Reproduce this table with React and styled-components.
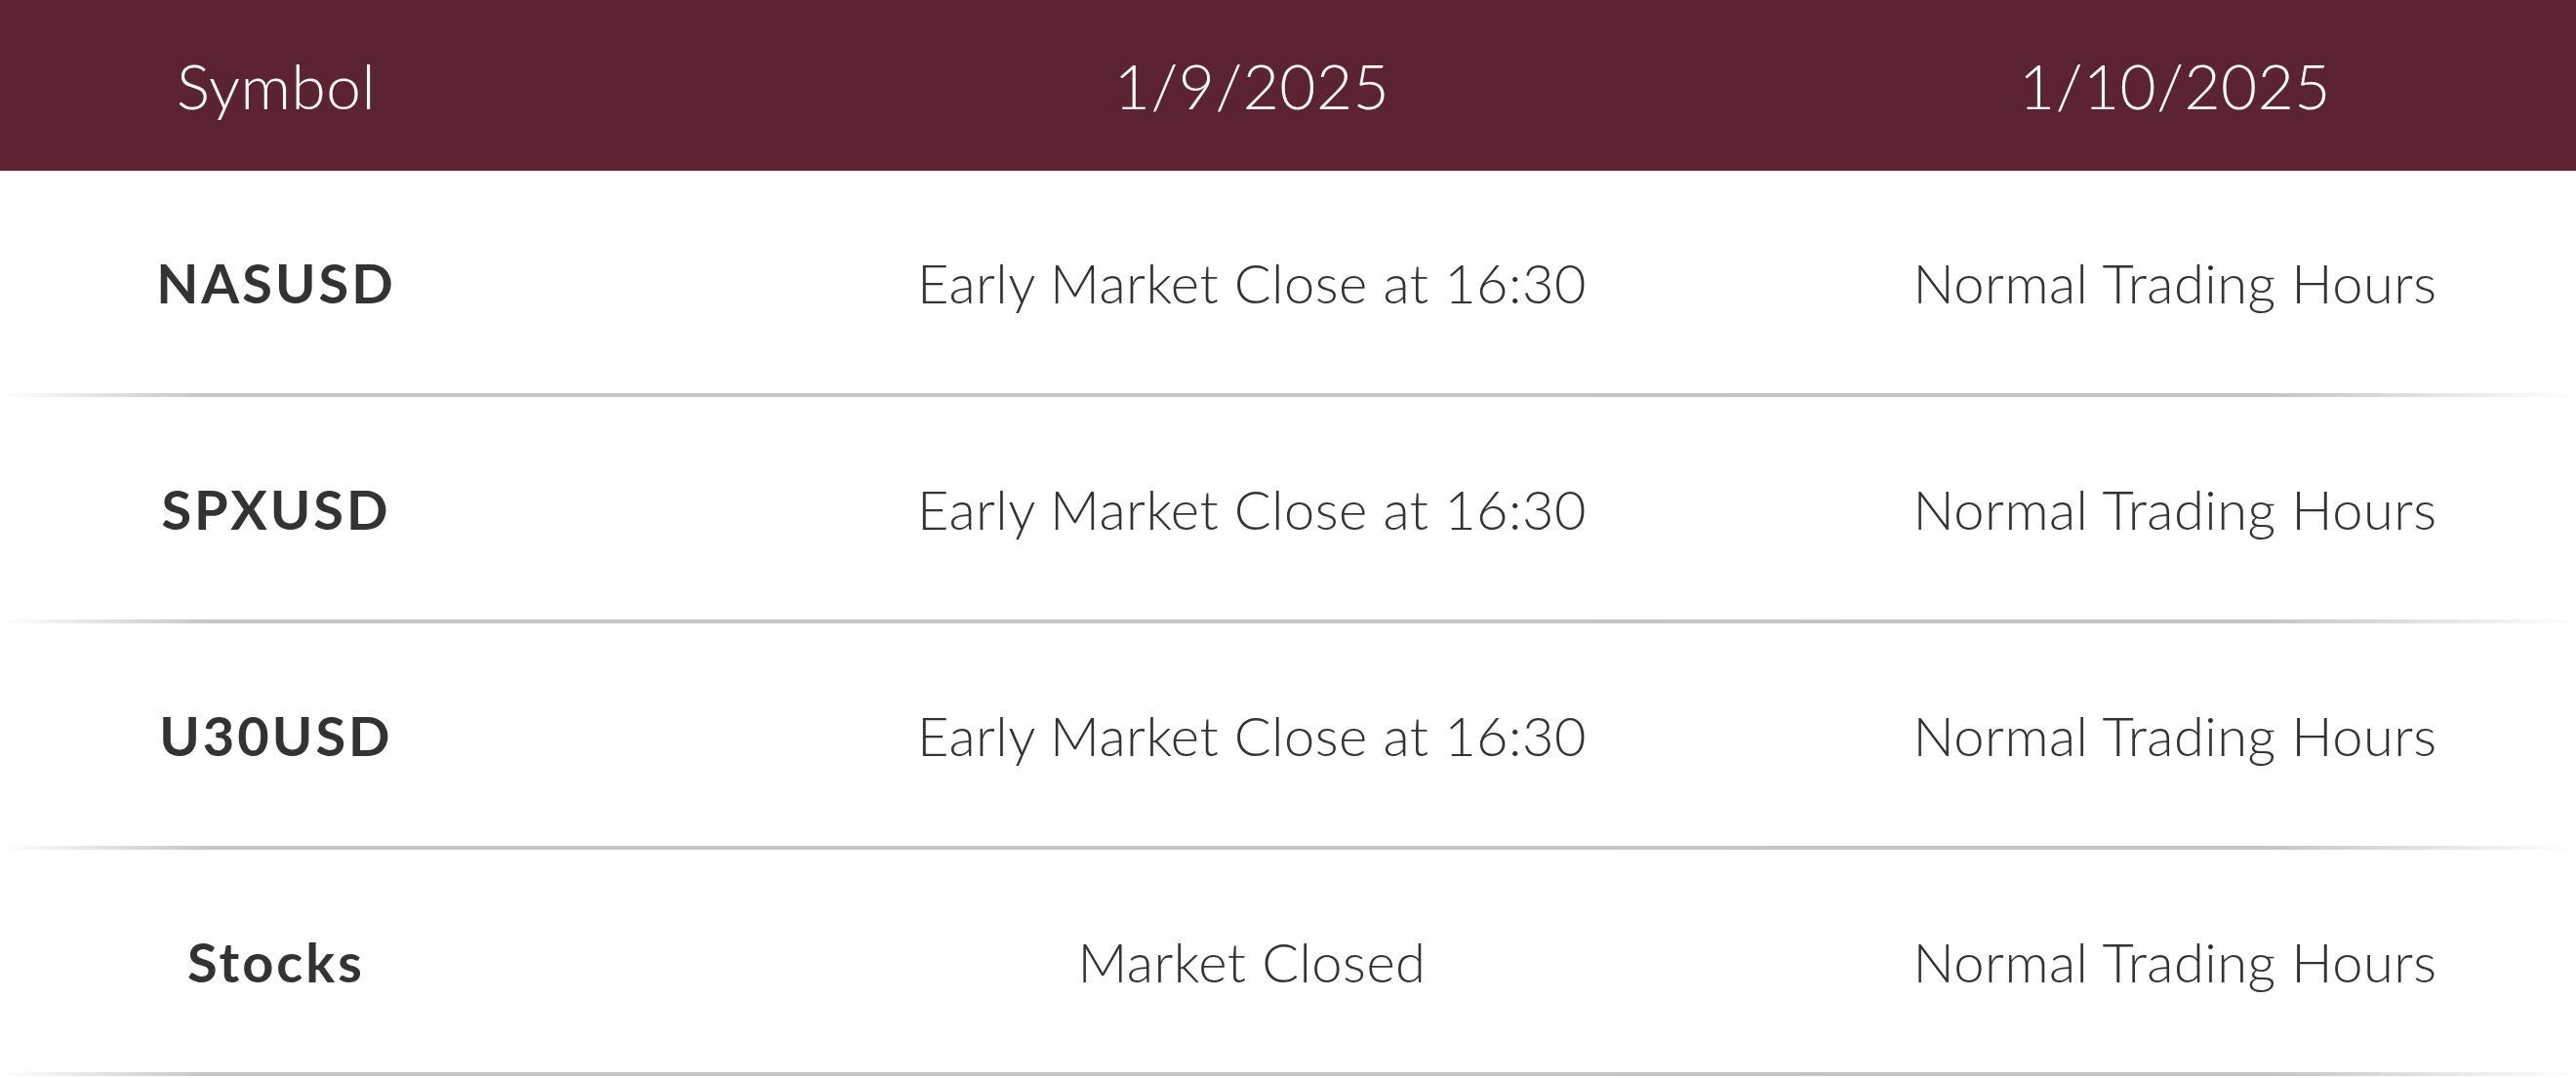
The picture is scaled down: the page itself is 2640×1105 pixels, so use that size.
import React from 'react';
import styled, { createGlobalStyle } from 'styled-components';

const GlobalStyle = createGlobalStyle`
  html, body {
    margin: 0;
    padding: 0;
    background: #ffffff;
  }
  body {
    font-family: Lato, "Open Sans", sans-serif;
  }
`;

const Table = styled.div`
  width: 2640px;
`;

const Row = styled.div`
  display: grid;
  grid-template-columns: 566px 1434px minmax(0, 1fr);
  align-items: center;
  height: ${(p) => (p.head ? '175px' : '228px')};
  background: ${(p) => (p.head ? '#5c2333' : '#ffffff')};
`;

const Divider = styled.div`
  height: 4px;
  background: linear-gradient(
    90deg,
    rgba(196, 196, 196, 0) 0%,
    #c6c6c6 8%,
    #c4c4c4 88%,
    rgba(196, 196, 196, 0) 100%
  );
`;

const Cell = styled.div`
  display: flex;
  justify-content: center;
  min-width: 0;
  padding-right: ${(p) => (p.last ? '182px' : '0')};
  font-size: ${(p) => (p.head ? '64px' : '56px')};
  font-weight: ${(p) => (p.bold ? 700 : 300)};
  color: ${(p) => (p.head ? '#ffffff' : '#333333')};
  letter-spacing: ${(p) => (p.bold ? '3px' : '0.5px')};
  white-space: nowrap;
`;

const rows = [
  { symbol: 'NASUSD', d1: 'Early Market Close at 16:30', d2: 'Normal Trading Hours' },
  { symbol: 'SPXUSD', d1: 'Early Market Close at 16:30', d2: 'Normal Trading Hours' },
  { symbol: 'U30USD', d1: 'Early Market Close at 16:30', d2: 'Normal Trading Hours' },
  { symbol: 'Stocks', d1: 'Market Closed', d2: 'Normal Trading Hours' },
];

export default function App() {
  return (
    <>
      <GlobalStyle />
      <Table>
        <Row head>
          <Cell head>Symbol</Cell>
          <Cell head>1/9/2025</Cell>
          <Cell head last>1/10/2025</Cell>
        </Row>
        {rows.map((r) => (
          <React.Fragment key={r.symbol}>
            <Row>
              <Cell bold>{r.symbol}</Cell>
              <Cell>{r.d1}</Cell>
              <Cell last>{r.d2}</Cell>
            </Row>
            <Divider />
          </React.Fragment>
        ))}
      </Table>
    </>
  );
}
